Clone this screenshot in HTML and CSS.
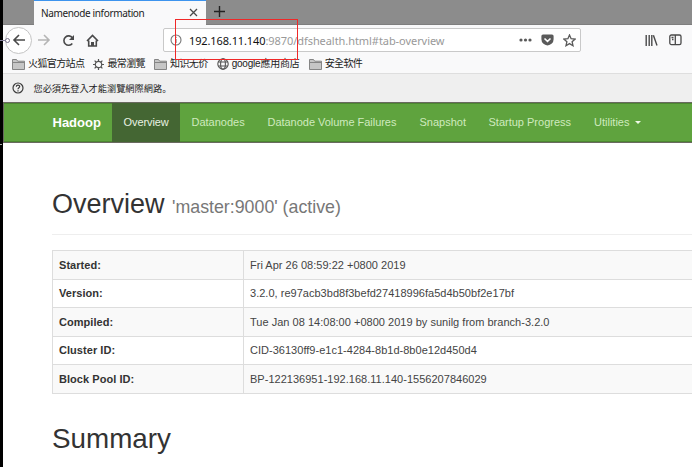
FILE: index.html
```
<!DOCTYPE html>
<html lang="zh-Hant">
<head>
<meta charset="utf-8">
<title>Namenode information</title>
<link rel="stylesheet" href="styles.css">
</head>
<body>
<div class="window">
  <div class="tabs">
    <div class="tab"><span class="tab-title">Namenode information</span>
      <svg class="close" width="9" height="9" viewBox="0 0 9 9"><path d="M1 1l7 7M8 1L1 8"/></svg>
    </div>
    <svg class="plus" width="11" height="11" viewBox="0 0 11 11"><path d="M5.5 0v11M0 5.5h11"/></svg>
  </div>
  <div class="toolbar">
    <div class="back"><svg width="14" height="14" viewBox="0 0 14 14"><path d="M13 7H2M7 2L2 7l5 5"/></svg></div>
    <svg class="forward" width="14" height="14" viewBox="0 0 14 14"><path d="M1 7h11M7 2l5 5-5 5"/></svg>
    <svg class="reload" width="13" height="13" viewBox="0 0 13 13"><path d="M10.3 9.5A4.7 4.7 0 1 1 10.4 3.8"/><path class="solid" d="M12 1v5H7z"/></svg>
    <svg class="home" width="13" height="13" viewBox="0 0 13 13"><path d="M1 7l5.500-5.500L12 7M2.700 6.500V12h7.600V6.500"/><path class="solid" d="M5 12V8h3v4z"/></svg>
    <div class="url">
      <svg class="info" width="12" height="12" viewBox="0 0 12 12"><circle cx="6" cy="6" r="5"/><path d="M6 5v4M6 2.700v1.400"/></svg>
      <span class="host">192.168.11.140</span><span class="path">:9870/dfshealth.html#tab-overview</span>
      <svg class="dots" width="13" height="4" viewBox="0 0 13 4"><circle cx="2" cy="2" r="1.6"/><circle cx="6.500" cy="2" r="1.6"/><circle cx="11" cy="2" r="1.6"/></svg>
      <svg class="pocket" width="13" height="12" viewBox="0 0 13 12"><path class="bag" d="M2 .5h9q1.600 0 1.600 1.600v3.200a6.100 6.100 0 0 1-12.200 0V2.100Q.4.5 2 .5z"/><path class="chev" d="M3.500 4.500l3 2.800 3-2.800"/></svg>
      <svg class="star" width="13" height="13" viewBox="0 0 13 13"><path d="M6.500 1l1.600 3.700 4 .4-3 2.600.9 4-3.500-2.100L3 11.700l.9-4-3-2.600 4-.4z"/></svg>
    </div>
    <svg class="library" width="13" height="12" viewBox="0 0 13 12"><path d="M1.200 1v11M4.200 1v11M6.800 1v11M8.400 1.200L12 11.500"/></svg>
    <svg class="sidebar" width="13" height="12" viewBox="0 0 13 12"><rect x=".8" y="1" width="11.2" height="9.6" rx="1.6"/><path d="M6.300 1v9.600M2.500 3.500h2M3 5.500h1.500"/></svg>
  </div>
  <div class="bookmarks">
    <svg class="folder" width="13" height="11" viewBox="0 0 13 11"><path d="M.5 10.500V.5h4l1.200 1.700h6.800v8.300zM.5 3.500h12"/></svg><span class="bm b1">火狐官方站点</span>
    <svg class="gear" width="11" height="11" viewBox="0 0 11 11"><circle cx="5.500" cy="5.500" r="3.200"/><path d="M5.500 0v2M5.500 9v2M0 5.500h2M9 5.500h2M1.600 1.600L3 3M8 8l1.400 1.400M9.400 1.600L8 3M3 8L1.600 9.400"/></svg><span class="bm b2">最常瀏覽</span>
    <svg class="folder" width="13" height="11" viewBox="0 0 13 11"><path d="M.5 10.500V.5h4l1.200 1.700h6.800v8.300zM.5 3.500h12"/></svg><span class="bm b3">知识无价</span>
    <svg class="globe" width="12" height="12" viewBox="0 0 12 12"><circle cx="6" cy="6" r="5.2"/><ellipse cx="6" cy="6" rx="2.4" ry="5.2"/><path d="M1.200 4h9.600M1.200 8h9.600"/></svg><span class="bm b4">google應用商店</span>
    <svg class="folder" width="13" height="11" viewBox="0 0 13 11"><path d="M.5 10.500V.5h4l1.200 1.700h6.800v8.300zM.5 3.500h12"/></svg><span class="bm b5">安全软件</span>
  </div>
  <div class="notice">
    <svg class="help" width="12" height="12" viewBox="0 0 12 12"><circle cx="6" cy="6" r="5"/><path d="M4.300 4.800c0-2.200 3.400-2.100 3.400-.2C7.700 5.700 6 5.700 6 7.200M6 8.200v1.300"/></svg><span class="notice-text">您必須先登入才能瀏覽網際網路<span class="stop" lang="zh-Hans">。</span></span>
  </div>
  <nav class="navbar">
    <span class="brand">Hadoop</span>
    <span class="item active">Overview</span>
    <span class="item n2">Datanodes</span>
    <span class="item n3">Datanode Volume Failures</span>
    <span class="item n4">Snapshot</span>
    <span class="item n5">Startup Progress</span>
    <span class="item n6">Utilities <i class="caret"></i></span>
  </nav>
  <main class="content">
    <h1 class="heading"><span class="title">Overview</span><small class="sub">'master:9000' (active)</small></h1>
    <table class="info-table">
      <tr><th>Started:</th><td>Fri Apr 26 08:59:22 +0800 2019</td></tr>
      <tr><th>Version:</th><td>3.2.0, re97acb3bd8f3befd27418996fa5d4b50bf2e17bf</td></tr>
      <tr><th>Compiled:</th><td>Tue Jan 08 14:08:00 +0800 2019 by sunilg from branch-3.2.0</td></tr>
      <tr><th>Cluster ID:</th><td>CID-36130ff9-e1c1-4284-8b1d-8b0e12d450d4</td></tr>
      <tr><th>Block Pool ID:</th><td>BP-122136951-192.168.11.140-1556207846029</td></tr>
    </table>
    <h2 class="summary">Summary</h2>
  </main>
</div>
<div class="highlight"></div>
<div class="edge-line"></div><div class="edge-dot"></div>
<div class="edge-mark"></div>
</body>
</html>
```
FILE: styles.css
```
* { box-sizing: border-box; }
body {
  margin: 0;
  width: 693px;
  height: 467px;
  overflow: hidden;
  background: #fff;
  font-family: "Liberation Sans", "Noto Sans CJK TC", sans-serif;
  font-size: 11px;
  color: #333;
}
svg { display: block; flex: none; fill: none; stroke: #4a4a4a; stroke-width: 1.6; }
svg .solid { fill: #4a4a4a; stroke: none; }
.window { width: 692px; height: 467px; border-left: 3px solid #000; overflow: hidden; }

.tabs { display: flex; height: 25px; background: #8c8c8c; border-bottom: 1px solid #7e7e7e; }
.tab {
  display: flex;
  align-items: center;
  justify-content: space-between;
  width: 172px;
  height: 25px;
  margin-left: 31px;
  padding: 0 8px 1px 7px;
  background: #f9f9fa;
  border-top: 1px solid #3d94ee;
}
.tab-title { font-family: "Noto Sans", sans-serif; font-size: 10px; letter-spacing: -.36px; color: #222; white-space: nowrap; }
.close { stroke-width: 1.3; }
.plus { margin: 6px 0 0 8px; stroke: #222; stroke-width: 1.4; }

.toolbar { display: flex; align-items: center; height: 30px; background: #f9f9fa; }
.back {
  display: flex;
  align-items: center;
  justify-content: center;
  width: 27px;
  height: 27px;
  margin-left: 2px;
  border: 1px solid #c4c4c4;
  border-radius: 50%;
  background: #fff;
}
.forward { margin-left: 5px; stroke: #b5b5b5; }
.reload { margin-left: 11px; }
.home { margin-left: 11px; }
.url {
  display: flex;
  align-items: center;
  width: 418px;
  height: 24px;
  margin-left: 64px;
  padding-left: 6px;
  border: 1px solid #c9c9c9;
  border-radius: 2px;
  background: #fff;
  font-family: "Noto Sans", sans-serif;
  font-size: 11px;
  white-space: nowrap;
}
.info { stroke: #777; stroke-width: 1.1; }
.host { margin-left: 7px; letter-spacing: -.12px; color: #111; }
.path { letter-spacing: -.06px; color: #999; }
.dots { margin-left: auto; fill: #5a5a5a; stroke: none; }
.pocket { margin-left: 9px; }
.bag { fill: #5a5a5a; stroke: none; }
.chev { stroke: #fff; }
.star { margin: 0 4px 0 9px; stroke: #5a5a5a; stroke-width: 1.3; }
.library { margin-left: 64px; stroke-width: 1.4; }
.sidebar { margin-left: 11px; stroke-width: 1.3; }

.bookmarks {
  display: flex;
  align-items: center;
  height: 19px;
  padding-left: 9px;
  background: #f9f9fa;
  border-bottom: 1px solid #dedede;
}
.bm { color: #222; font-size: 10px; line-height: 16px; letter-spacing: -.6px; margin: 0 9px 0 3px; white-space: nowrap; }
.b4 { letter-spacing: -.2px; }
.folder { fill: #c6c6c6; stroke: #858585; stroke-width: 1; }
.gear { stroke: #555; stroke-width: 1.2; }
.globe { stroke: #555; stroke-width: 1.1; }

.notice { display: flex; align-items: center; height: 28px; padding-left: 9px; background: #efefef; }
.help { stroke: #3c3c3c; stroke-width: 1.2; }
.notice-text { margin-left: 9.5px; font-size: 9.2px; color: #222; }
.stop { font-family: "Noto Sans CJK SC", sans-serif; }

.navbar {
  display: flex;
  height: 41px;
  padding-left: 49px;
  background: #5fa33e;
  border: 1px solid #69695f;
  border-width: 1px 0 1px 1px;
  box-shadow: inset 0 1px #4c8730, inset 0 -1px #4c8730;
  line-height: 39px;
  color: #cfeabf;
  white-space: nowrap;
}
.brand { width: 59px; margin-left: -.5px; font-size: 13px; font-weight: 700; color: #fff; }
.item { font-size: 11px; }
.active { width: 68px; padding-left: 12px; background: #446633; color: #e8f2e2; letter-spacing: -.08px; }
.n2 { width: 76px; margin-left: 12px; }
.n3 { width: 152px; letter-spacing: -.03px; }
.n4 { width: 69px; }
.n5 { width: 105.5px; }
.caret { display: inline-block; margin-left: 2px; vertical-align: 2px; border: 3px solid transparent; border-top-color: #eff9e8; border-bottom: 0; }

.content { width: 700px; padding-left: 49px; }
.heading { height: 92px; margin: 0; padding-top: 44px; border-bottom: 1px solid #eee; font-size: 27px; font-weight: 400; line-height: 34px; white-space: nowrap; }
.sub { margin-left: 7.5px; font-size: 17.8px; color: #777; }
.info-table { width: 660px; margin-top: 15px; border-collapse: collapse; table-layout: fixed; }
th, td { height: 28.5px; padding: 0 6px; border: 1px solid #ddd; text-align: left; white-space: nowrap; line-height: 16px; }
th { width: 191px; font-weight: 700; letter-spacing: .05px; }
td { color: #444; letter-spacing: .02px; }
tr:nth-child(odd) { background: #f9f9f9; }
.summary { margin: 28px 0 0; font-size: 27.8px; font-weight: 400; line-height: 34px; }

.highlight { position: absolute; left: 175px; top: 19px; width: 123px; height: 41px; border: 1px solid #f02828; }
.edge-line { position: absolute; left: 0; top: 40px; width: 6px; height: 1px; background: #85809a; }
.edge-dot { position: absolute; left: 5px; top: 38px; width: 5px; height: 5px; border: 1px solid #77718a; border-radius: 50%; background: #fff; }
.edge-mark { position: absolute; left: 0; top: 144px; width: 2px; height: 1px; background: #aaa; }
```
